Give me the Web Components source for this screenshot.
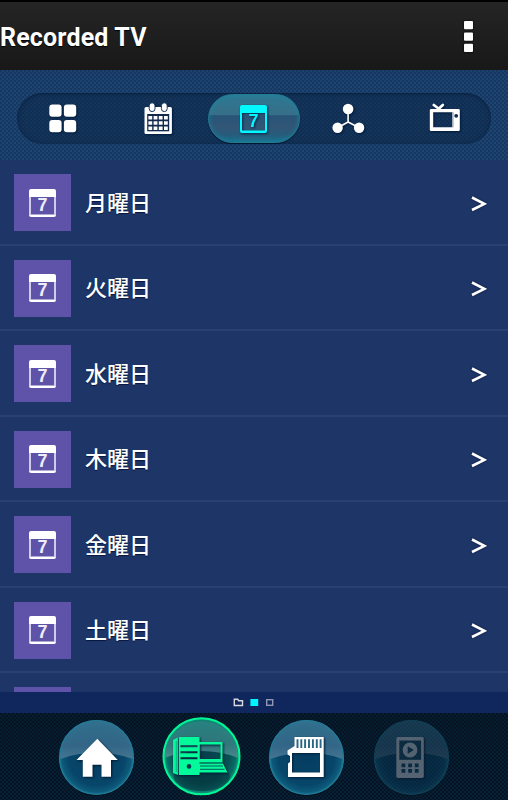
<!DOCTYPE html>
<html lang="ja">
<head>
<meta charset="utf-8">
<title>Recorded TV</title>
<style>
html,body{margin:0;height:100%;background:#000;overflow:hidden}
body{font-family:Roboto,"Noto Sans CJK JP",sans-serif;color:#fff}
</style>
</head>
<body>
<tv-app></tv-app>
<script>
const define = (name, html) => customElements.define(name, class extends HTMLElement {
  constructor() {
    super();
    const t = document.createElement('template');
    t.innerHTML = html;
    this.attachShadow({mode: 'open'}).append(t.content.cloneNode(true));
  }
});

define('app-header', `
<style>
:host{display:flex;box-sizing:border-box;height:70px;border-top:2px solid #000;align-items:center;justify-content:space-between;
 background:linear-gradient(#252525,#181818);padding:0 35px 0 0}
h1{margin:3px 0 0;font:700 25px/30px Roboto,sans-serif;letter-spacing:.17px;white-space:nowrap;color:#fff;text-shadow:0 1px 1px #000}
svg{display:block;filter:drop-shadow(0 0 1px #000)}
</style>
<h1><slot></slot></h1>
<svg width="9" height="33" fill="#fff"><rect y="1" width="9" height="8.3" rx="1"/><rect y="12.4" width="9" height="8.3" rx="1"/><rect y="23.7" width="9" height="8.3" rx="1"/></svg>`);

define('calendar-seven', `
<style>:host{display:block;width:27px;height:28px}svg{display:block}text{font:bold 18px "Liberation Sans",sans-serif;fill:var(--digit,currentColor)}.line{stroke:var(--line,currentColor)}</style>
<svg width="27" height="28" viewBox="0 0 27 28"><path fill="currentColor" d="M2 0H25Q27 0 27 2V8H0V2Q0 0 2 0ZM0 25.5H27V26Q27 28 25 28H2Q0 28 0 26Z"/><path class="line" d="M1 8V26M26 8V26" stroke-width="2"/><text x="8.5" y="22.3">7</text></svg>`);

define('tab-bar', `
<style>
:host{display:flex;box-sizing:border-box;height:90px;padding:23px 17px;background:
 linear-gradient(#19365f55,transparent 8px),
 conic-gradient(#1b4777 25%,#17375f 0 50%,#1b4270 0 75%,#17375f 0) 0 0/4px 4px}
nav{flex:1;display:grid;grid-template-columns:repeat(5,1fr);height:51px;border-radius:26px;background:#0a203b6b;
 box-shadow:inset 0 1px 2px #071b3588,inset 0 0 5px #08203b66}
::slotted(*){min-width:0}
</style>
<nav><slot></slot></nav>`);

define('tab-item', `
<style>
:host{display:block;height:51px}
::slotted(svg){display:block;width:100%;height:51px;overflow:visible;filter:drop-shadow(1px 1px 1px #001a3a)}
:host([active]){display:flex;align-items:center;justify-content:center;box-sizing:border-box;width:92px;height:49px;margin:.5px 0 0 1.4px;border-radius:24.5px;border:1.5px solid #237b94;color:#00faff;
 background:linear-gradient(#2d7893 0,#386e88 42%,#275478 44%,#325676 68%,#285b7b 84%,#18718e);
 box-shadow:0 1px 1px #02172f,inset 0 0 5px #198ca4aa}
::slotted(calendar-seven){margin:1px 1px 0 0;filter:drop-shadow(1px 1px 1px #06264a)}
</style>
<slot></slot>`);

define('day-list', `
<style>:host{display:block;height:532px;overflow:hidden;background:#1e3567}</style><slot></slot>`);

define('day-row', `
<style>
:host{display:flex;box-sizing:border-box;height:85.5px;padding:0 21px 0 14px;align-items:center;border-bottom:2px solid #2a4070}
.tile{width:57px;height:57px;background:#5e53a8;display:flex;align-items:center;justify-content:center;margin-top:2px;flex:none;--digit:#f0edfb;--line:#d0cbea}
::slotted(calendar-seven){margin-top:0}
.label{flex:1;margin:-2px 0 0 14px;font:500 22px/32px "Noto Sans CJK JP",sans-serif;white-space:nowrap;text-shadow:0 1px 1px #061840}
.go{display:block;margin-top:4px;filter:drop-shadow(0 0 1px #061840)}
</style>
<div class="tile"><slot name="icon"></slot></div>
<div class="label"><slot></slot></div>
<svg class="go" width="16" height="18" fill="none" stroke="#fff" stroke-width="2.6"><path d="M1 2.5 13.3 8.8 1 15"/></svg>`);

define('page-dots', `
<style>:host{display:flex;height:21px;background:#10275d;justify-content:center;align-items:center}svg{display:block}</style>
<svg width="42" height="9" viewBox="0 0 42 9"><path fill="none" stroke="#d8d8df" stroke-width="1.4" d="M1.3 7.5V1.3H4.7L5.7 2.7H9.5V7.5Z"/><rect x="17.4" y="1" width="7.8" height="7" fill="#00f6ff"/><rect x="33.7" y="1.7" width="6" height="5.6" fill="none" stroke="#9097b3" stroke-width="1.4"/></svg>`);

define('app-dock', `
<style>
:host{display:grid;box-sizing:border-box;height:87px;padding-left:44px;grid-template-columns:repeat(4,105px);background:
 linear-gradient(#00000022,#00000010),
 conic-gradient(#082238 25%,#061527 0 50%,#082238 0 75%,#061527 0) 0 0/4px 4px}
</style><slot></slot>`);

define('dock-item', `
<style>
:host{display:grid;width:105px;height:87px}
:host([disabled]){opacity:.38}
.orb,::slotted(svg){grid-area:1/1;display:block;width:105px;height:87px}
::slotted(svg){z-index:1;filter:drop-shadow(1px 1px 1px #001c35)}
.on{display:none}
:host([active]) .on{display:block}
:host([active]) .off{display:none}
</style>
<svg class="orb" viewBox="0 0 105 87">
<defs>
<radialGradient id="b" cx=".5" cy=".5" r=".5"><stop offset="0" stop-color="#053c60"/><stop offset=".75" stop-color="#07466a"/><stop offset=".93" stop-color="#0d5a7a"/><stop offset="1" stop-color="#1f7896"/></radialGradient>
<linearGradient id="s" x2="0" y2="1"><stop offset="0" stop-color="#347390"/><stop offset=".65" stop-color="#37698a"/><stop offset="1" stop-color="#4b7995"/></linearGradient>
<radialGradient id="g" cx=".5" cy=".5" r=".5"><stop offset="0" stop-color="#073b4a"/><stop offset=".72" stop-color="#075052"/><stop offset=".9" stop-color="#096c66"/><stop offset="1" stop-color="#13a583"/></radialGradient>
<linearGradient id="t" x2="0" y2="1"><stop offset="0" stop-color="#2a8583"/><stop offset=".65" stop-color="#357b80"/><stop offset="1" stop-color="#508d91"/></linearGradient>
</defs>
<g class="off"><circle cx="52.5" cy="45.5" r="37.5" fill="#020e1b"/><circle cx="52.5" cy="44.5" r="37.2" fill="url(#b)"/>
<path fill="url(#s)" opacity=".9" d="M16.2 46A36.4 36.4 0 1 1 88.8 46Q71 39.5 52.5 39.5T16.2 46Z"/>
<circle cx="52.5" cy="44.5" r="37" fill="none" stroke="#217c98" stroke-width="1.2"/></g>
<g class="on"><circle cx="52.5" cy="43.3" r="38" fill="url(#g)"/>
<path fill="url(#t)" opacity=".9" d="M15.5 45A37 37 0 0 1 89.5 45Q72 38 52.5 38T15.5 45Z"/><ellipse cx="53" cy="64" rx="28" ry="14" fill="#042735" opacity=".45"/>
<circle cx="52.5" cy="43.3" r="38" fill="none" stroke="#00f796" stroke-width="2"/></g>
</svg><slot></slot>`);

const days = ['月曜日', '火曜日', '水曜日', '木曜日', '金曜日', '土曜日']
  .map(d => `<day-row><calendar-seven slot="icon"></calendar-seven>${d}</day-row>`).join('');

define('tv-app', `
<style>:host{display:flex;flex-direction:column;width:508px;height:800px;overflow:hidden}:host>*{flex:none}</style>
<app-header>Recorded TV</app-header>
<tab-bar>
<tab-item><svg viewBox="17 93 94.8 51" fill="#fff"><rect x="49.3" y="104.5" width="12.3" height="12.3" rx="3"/><rect x="63.9" y="104.5" width="12.3" height="12.3" rx="3"/><rect x="49.3" y="120" width="12.3" height="12.3" rx="3"/><rect x="63.9" y="120" width="12.3" height="12.3" rx="3"/></svg></tab-item>
<tab-item><svg viewBox="111.8 93 94.8 51"><rect x="144.3" y="107" width="27.4" height="27" rx="1.5" fill="#fff"/><g fill="#fff" stroke="#153557" stroke-width="1"><rect x="149" y="102.8" width="5.8" height="8.8" rx="2.9"/><rect x="161.2" y="102.8" width="5.8" height="8.8" rx="2.9"/></g><rect x="147" y="114" width="22" height="17.3" fill="#10294d"/><g fill="#fff">
<path d="M148.2 116h3.8v3.6h-3.8zM153.4 116h3.8v3.6h-3.8zM158.6 116h3.8v3.6h-3.8zM163.8 116h3.8v3.6h-3.8zM148.2 121.2h3.8v3.6h-3.8zM153.4 121.2h3.8v3.6h-3.8zM158.6 121.2h3.8v3.6h-3.8zM163.8 121.2h3.8v3.6h-3.8zM148.2 126.4h3.8v3.6h-3.8zM153.4 126.4h3.8v3.6h-3.8zM158.6 126.4h3.8v3.6h-3.8zM163.8 126.4h3.8v3.6h-3.8z"/></g></svg></tab-item>
<tab-item active><calendar-seven></calendar-seven></tab-item>
<tab-item><svg viewBox="301.4 93 94.8 51" fill="#fff"><path d="M348.5 109V122L338 127.7M348.5 122 359.5 127.7" fill="none" stroke="#fff" stroke-width="1.6"/><circle cx="348.5" cy="109" r="5.3"/><circle cx="338" cy="127.7" r="5.2"/><circle cx="359.5" cy="127.7" r="5.2"/></svg></tab-item>
<tab-item><svg viewBox="396.2 93 94.8 51"><path fill="none" stroke="#fff" stroke-width="2.8" stroke-linecap="round" d="M434 105 440 109.5M443 105 437.5 110"/><path fill="#fff" fill-rule="evenodd" d="M431.2 109H458.8Q460 109 460 110.2V129.7Q460 131 458.8 131H431.2Q430 131 430 129.7V110.2Q430 109 431.2 109ZM433.4 112.2V127.3H452.6V112.2Z"/><path d="M453.5 112V127.5" stroke="#b8c2d3" stroke-width="1"/><circle cx="456.4" cy="115.8" r="1.9" fill="#10294d"/></svg></tab-item>
</tab-bar>
<day-list>${days}<day-row></day-row></day-list>
<page-dots></page-dots>
<app-dock>
<dock-item><svg viewBox="44 713 105 87"><path fill="#fff" d="M97.3 738.7 117.8 760H111V776.8H101.5V764.7H92.5V776.8H82.8V760H76.5Z"/></svg></dock-item>
<dock-item active><svg viewBox="149 713 105 87"><g fill="#04f99b"><path fill-rule="evenodd" d="M179 737H199.5V775H179ZM180.5 745.3V747.3H197.5V745.3ZM180.5 751.3V753.3H197.5V751.3ZM180.5 757.3V759.3H197.5V757.3Z"/><path d="M173 740 178 737.3V775L173 773Z"/><path fill-rule="evenodd" d="M199 742H222.5V762.5H199ZM199.5 744.5V759H220.5V744.5Z"/><path d="M199 763.5H223L227.5 772.5H199Z"/></g><path d="M178.2 738V774.5" stroke="#087d6a" stroke-width=".8"/><path d="M176.3 741V772" stroke="#087d6a" stroke-width=".6"/><path d="M200 766H223M200 769.3H224.5" stroke="#075b59" stroke-width="1"/><circle cx="189" cy="766.4" r="2.3" fill="#073b4a"/></svg></dock-item>
<dock-item><svg viewBox="254 713 105 87"><path fill="#fff" fill-rule="evenodd" d="M294.5 737H323.7V777H288V763.5L290 762V756L287.5 754.5V750.5L294.5 746ZM292 753V772.5H320V753Z"/><path d="M297.5 739.2V748M301.3 739.2V748M305.1 739.2V748M309 739.2V748M312.9 739.2V748M316.8 739.2V748M320.6 739.2V748" stroke="#286684" stroke-width="1.9"/></svg></dock-item>
<dock-item disabled><svg viewBox="359 713 105 87"><rect x="396.3" y="737" width="27.5" height="41" rx="1.8" fill="#d4dbe4"/><rect x="399.3" y="740.5" width="21.8" height="19.3" fill="#164966"/><circle cx="410" cy="750" r="7.4" fill="#d4dbe4"/><path d="M407.7 746.2 413.8 750 407.7 753.8Z" fill="#0e4464"/><path fill="#0e4464" d="M401.5 763.4h3.8v3.8h-3.8zM408.2 763.4h3.8v3.8h-3.8zM414.8 763.4h3.8v3.8h-3.8zM401.5 769h3.8v3.8h-3.8zM408.2 769h3.8v3.8h-3.8zM414.8 769h3.8v3.8h-3.8z"/></svg></dock-item>
</app-dock>`);
</script>
</body>
</html>
